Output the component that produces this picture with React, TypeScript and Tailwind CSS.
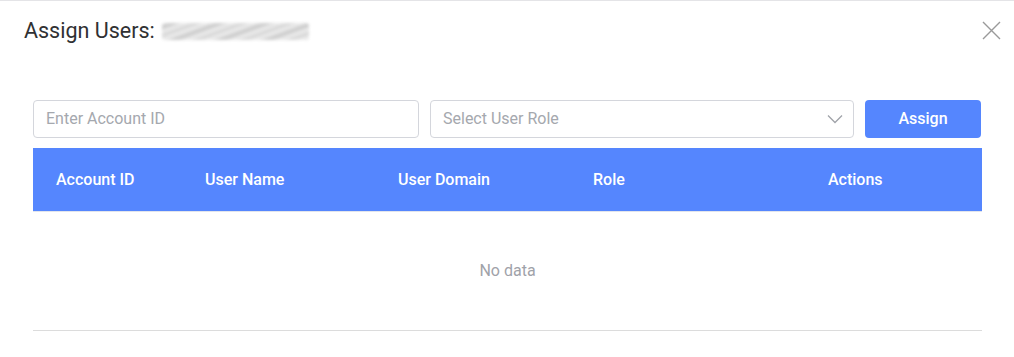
import React from "react";

export default function App() {
  const cols = [
    { label: "Account ID", w: "w-[149px]" },
    { label: "User Name", w: "w-[193px]" },
    { label: "User Domain", w: "w-[195px]" },
    { label: "Role", w: "w-[235px]" },
    { label: "Actions", w: "flex-1" },
  ];
  return (
    <div
      className="w-[1014px] h-[357px] bg-white border-t border-[#e4e4e7] overflow-hidden"
      style={{ fontFamily: "Roboto, 'Noto Sans', sans-serif" }}
    >
      <div className="flex items-start justify-between pl-[24px] pr-[13px] pt-[15px]">
        <div className="flex items-center h-[30px]">
          <span className="text-[21.5px] leading-[30px] text-[#303133]">Assign Users:</span>
          <span className="ml-[7px] w-[147px] h-[17px] rounded-[3px] bg-[repeating-linear-gradient(160deg,#e8e8e8_0px,#c4c4c4_4px,#ececec_8px,#d2d2d2_12px,#f0f0f0_16px)] blur-[1.5px] opacity-90" />
        </div>
        <svg width="19" height="19" viewBox="0 0 19 19" className="mt-[5px]">
          <path d="M1 1 L18 18 M18 1 L1 18" stroke="#9a9a9a" strokeWidth="1.4" fill="none" />
        </svg>
      </div>

      <div className="px-[33px] pt-[54px] w-[1015px]">
        <div className="flex gap-[11px]">
          <div className="w-[386px] h-[38px] border border-[#d4d6dc] rounded-[4px] flex items-center pl-[12px]">
            <span className="text-[16px] text-[#a5a8ae]">Enter Account ID</span>
          </div>
          <div className="w-[424px] h-[38px] border border-[#d4d6dc] rounded-[4px] flex items-center justify-between pl-[12px] pr-[10px]">
            <span className="text-[16px] text-[#a5a8ae]">Select User Role</span>
            <svg width="16" height="10" viewBox="0 0 16 10">
              <path d="M1 1.5 L8 8.5 L15 1.5" stroke="#a0a3a9" strokeWidth="1.3" fill="none" />
            </svg>
          </div>
          <div className="w-[116px] h-[38px] rounded-[4px] bg-[#5586fe] flex items-center justify-center">
            <span className="text-[16px] font-medium text-white">Assign</span>
          </div>
        </div>

        <div className="mt-[10px] w-[949px]">
          <div className="h-[64px] bg-[#5586fe] border-b border-[#e2e5ec] flex items-center">
            {cols.map((c) => (
              <div key={c.label} className={`${c.w} pl-[23px] text-[16px] font-medium text-white`}>
                {c.label}
              </div>
            ))}
          </div>
          <div className="h-[119px] border-b border-[#dcdcdc] flex items-center justify-center">
            <span className="text-[16px] text-[#9fa2a9] -mt-[1px]">No data</span>
          </div>
        </div>
      </div>
    </div>
  );
}
